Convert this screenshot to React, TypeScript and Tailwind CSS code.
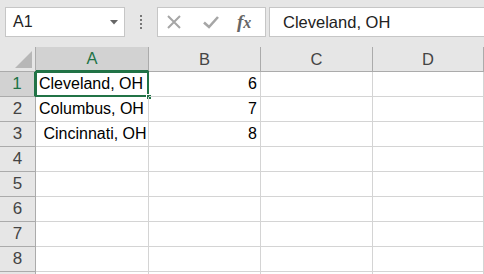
import React from "react";

const cols = ["A", "B", "C", "D"];
const widths = ["w-[113px]", "w-[112px]", "w-[112px]", "flex-1"];
const data: Record<number, [string, string]> = {
  1: ["Cleveland, OH", "6"],
  2: ["Columbus, OH", "7"],
  3: ["\u00a0Cincinnati, OH", "8"],
};

export default function App() {
  const font = { fontFamily: '"Liberation Sans", Arial, sans-serif' };
  return (
    <div className="w-[484px] h-[274px] overflow-hidden bg-white" style={font}>
      {/* formula bar */}
      <div className="h-[47px] bg-[#e6e6e6] flex items-start pt-[7px]">
        <div className="ml-[5px] w-[120px] h-[30px] bg-white border border-[#c6c6c6] flex items-center pl-[7px] pr-[6px]">
          <span className="text-[16px] text-[#222] flex-1">A1</span>
          <svg width="8" height="5" viewBox="0 0 8 5"><path d="M0 0 H8 L4 4.5 Z" fill="#666" /></svg>
        </div>
        <div className="w-[32px] h-[30px] flex flex-col items-center justify-center gap-[2px]">
          <span className="w-[2px] h-[2px] bg-[#777]" />
          <span className="w-[2px] h-[2px] bg-[#777]" />
          <span className="w-[2px] h-[2px] bg-[#777]" />
          <span className="w-[2px] h-[2px] bg-[#777]" />
        </div>
        <div className="w-[109px] h-[30px] bg-white border border-[#c6c6c6] flex items-center pl-[8px]">
          <svg width="16" height="16" viewBox="0 0 16 16" className="mr-[21px]">
            <path d="M2 2 L14 14 M14 2 L2 14" stroke="#a6a6a6" strokeWidth="2" />
          </svg>
          <svg width="16" height="14" viewBox="0 0 16 14" className="mr-[18px]">
            <path d="M1 7.5 L6 12 L15 2" stroke="#a6a6a6" strokeWidth="2.6" fill="none" />
          </svg>
          <span className="text-[19px] text-[#666] italic font-bold" style={{ fontFamily: '"Liberation Serif", serif' }}>
            f<span className="text-[16px]">x</span>
          </span>
        </div>
        <div className="ml-[3px] flex-1 h-[30px] bg-white border border-[#c6c6c6] border-r-0 flex items-center pl-[13px]">
          <span className="text-[16.5px] text-[#222]">Cleveland, OH</span>
        </div>
      </div>
      {/* header row */}
      <div className="flex h-[25px] bg-[#e6e6e6] border-b border-[#ababab]">
        <div className="w-[36px] border-r border-[#ababab] relative">
          <svg className="absolute right-[3px] bottom-[3px]" width="17" height="17" viewBox="0 0 17 17">
            <path d="M17 0 V17 H0 Z" fill="#b7b7b7" />
          </svg>
        </div>
        {cols.map((c, i) => (
          <div
            key={c}
            className={`${widths[i]} flex items-center justify-center text-[16.5px] ${
              i === 0 ? "bg-[#d2d2d2] text-[#217346] border-b-2 border-[#217346] -mb-px border-r border-r-[#ababab]" : "text-[#444] border-r border-[#ababab]"
            }`}
          >
            {c}
          </div>
        ))}
      </div>
      {/* rows */}
      {[1, 2, 3, 4, 5, 6, 7, 8, 9].map((r) => (
        <div key={r} className="flex h-[25px]">
          <div
            className={`w-[36px] flex items-center justify-center text-[17px] border-b border-r ${
              r === 1 ? "bg-[#d2d2d2] text-[#217346] border-r-2 border-r-[#217346] border-b-[#ababab]" : "bg-[#e6e6e6] text-[#444] border-[#ababab]"
            }`}
          >
            {r < 9 ? r : ""}
          </div>
          {cols.map((c, i) => {
            const v = data[r]?.[i] ?? "";
            const sel = r === 1 && i === 0;
            return (
              <div
                key={c}
                className={`${widths[i]} relative flex items-center text-[16px] text-black border-r border-b border-[#d4d4d4] ${
                  i === 1 ? "justify-end pr-[3px]" : "pl-[3px]"
                }`}
              >
                {sel && (
                  <>
                    <div className="absolute left-[-1px] top-[-1px] right-[-1px] bottom-[-1px] border-2 border-[#217346]" />
                    <div className="absolute right-[-4px] bottom-[-4px] w-[6px] h-[6px] bg-[#217346] border border-white" />
                  </>
                )}
                <span className="relative">{v}</span>
              </div>
            );
          })}
        </div>
      ))}
    </div>
  );
}
